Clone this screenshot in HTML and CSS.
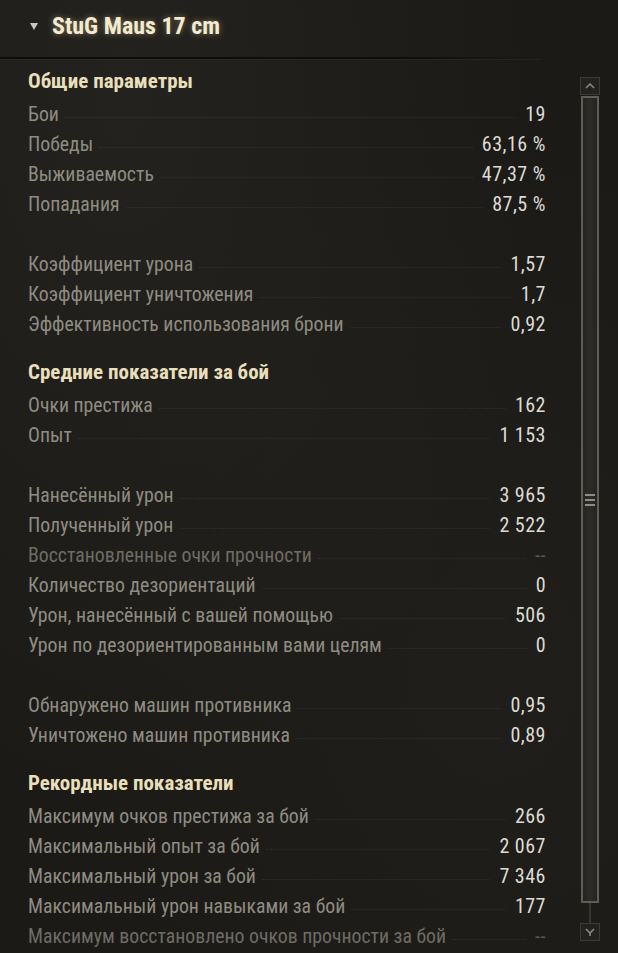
FILE: index.html
```html
<!DOCTYPE html>
<html lang="ru">
<head>
    <meta charset="UTF-8">
    <meta name="viewport" content="width=device-width, initial-scale=1.0">
    <title>StuG Maus 17 cm</title>
    <link rel="stylesheet" href="styles.css">
</head>
<body>

<div class="panel">
    <!-- Vehicle title -->
    <div class="panel-header">
        <span class="collapse-arrow"></span>
        <h1 class="vehicle-name">StuG Maus 17 cm</h1>
    </div>
    <div class="header-line"></div>

    <div class="panel-body">
        <div class="stats">
            <h2 class="stats-heading">Общие параметры</h2>
            <div class="stat"><span class="stat-label">Бои</span><span class="stat-dots"></span><span class="stat-value">19</span></div>
            <div class="stat"><span class="stat-label">Победы</span><span class="stat-dots"></span><span class="stat-value">63,16 %</span></div>
            <div class="stat"><span class="stat-label">Выживаемость</span><span class="stat-dots"></span><span class="stat-value">47,37 %</span></div>
            <div class="stat"><span class="stat-label">Попадания</span><span class="stat-dots"></span><span class="stat-value">87,5 %</span></div>
            <div class="stat-gap"></div>
            <div class="stat"><span class="stat-label">Коэффициент урона</span><span class="stat-dots"></span><span class="stat-value">1,57</span></div>
            <div class="stat"><span class="stat-label">Коэффициент уничтожения</span><span class="stat-dots"></span><span class="stat-value">1,7</span></div>
            <div class="stat"><span class="stat-label">Эффективность использования брони</span><span class="stat-dots"></span><span class="stat-value">0,92</span></div>

            <h2 class="stats-heading">Средние показатели за бой</h2>
            <div class="stat"><span class="stat-label">Очки престижа</span><span class="stat-dots"></span><span class="stat-value">162</span></div>
            <div class="stat"><span class="stat-label">Опыт</span><span class="stat-dots"></span><span class="stat-value">1 153</span></div>
            <div class="stat-gap"></div>
            <div class="stat"><span class="stat-label">Нанесённый урон</span><span class="stat-dots"></span><span class="stat-value">3 965</span></div>
            <div class="stat"><span class="stat-label">Полученный урон</span><span class="stat-dots"></span><span class="stat-value">2 522</span></div>
            <div class="stat disabled"><span class="stat-label">Восстановленные очки прочности</span><span class="stat-dots"></span><span class="stat-value">--</span></div>
            <div class="stat"><span class="stat-label">Количество дезориентаций</span><span class="stat-dots"></span><span class="stat-value">0</span></div>
            <div class="stat"><span class="stat-label">Урон, нанесённый с вашей помощью</span><span class="stat-dots"></span><span class="stat-value">506</span></div>
            <div class="stat"><span class="stat-label">Урон по дезориентированным вами целям</span><span class="stat-dots"></span><span class="stat-value">0</span></div>
            <div class="stat-gap"></div>
            <div class="stat"><span class="stat-label">Обнаружено машин противника</span><span class="stat-dots"></span><span class="stat-value">0,95</span></div>
            <div class="stat"><span class="stat-label">Уничтожено машин противника</span><span class="stat-dots"></span><span class="stat-value">0,89</span></div>

            <h2 class="stats-heading">Рекордные показатели</h2>
            <div class="stat"><span class="stat-label">Максимум очков престижа за бой</span><span class="stat-dots"></span><span class="stat-value">266</span></div>
            <div class="stat"><span class="stat-label">Максимальный опыт за бой</span><span class="stat-dots"></span><span class="stat-value">2 067</span></div>
            <div class="stat"><span class="stat-label">Максимальный урон за бой</span><span class="stat-dots"></span><span class="stat-value">7 346</span></div>
            <div class="stat"><span class="stat-label">Максимальный урон навыками за бой</span><span class="stat-dots"></span><span class="stat-value">177</span></div>
            <div class="stat disabled"><span class="stat-label">Максимум восстановлено очков прочности за бой</span><span class="stat-dots"></span><span class="stat-value">--</span></div>
        </div>

        <!-- Scrollbar -->
        <div class="scrollbar">
            <div class="scroll-btn">
                <svg width="10" height="6" viewBox="0 0 10 6"><path d="M1 5 L5 1 L9 5" fill="none" stroke="#8a877c" stroke-width="1.6"/></svg>
            </div>
            <div class="scroll-thumb">
                <span class="grip"></span>
                <span class="grip"></span>
                <span class="grip"></span>
            </div>
            <div class="scroll-track"></div>
            <div class="scroll-btn">
                <svg width="10" height="8" viewBox="0 0 10 8"><path d="M1 1 L5 5 L9 1 M5 5 L5 8" fill="none" stroke="#8a877c" stroke-width="1.6"/></svg>
            </div>
        </div>
    </div>
</div>

</body>
</html>
```

FILE: styles.css
```css
body {
    margin: 0;
    padding: 0;
    background: #1b1a17;
    font-family: "Roboto Condensed", Roboto, "Liberation Sans", sans-serif;
}

.panel {
    width: 618px;
    height: 953px;
    overflow: hidden;
    background:
        radial-gradient(ellipse at 20% 10%, rgba(60, 58, 50, 0.25), transparent 60%),
        radial-gradient(ellipse at 80% 70%, rgba(50, 48, 42, 0.2), transparent 60%),
        #1b1a17;
}

.panel-header {
    height: 57px;
    display: flex;
    align-items: center;
    padding-left: 30px;
    box-sizing: border-box;
    padding-bottom: 6px;
}

.collapse-arrow {
    width: 0;
    height: 0;
    border-left: 4px solid transparent;
    border-right: 4px solid transparent;
    border-top: 7px solid #c9c6bc;
    margin-right: 14px;
    margin-top: 1px;
}

.vehicle-name {
    margin: 0;
    font-size: 24px;
    font-weight: bold;
    color: #f3ead0;
    text-shadow: 0 0 6px rgba(240, 220, 160, 0.45);
}

.header-line {
    width: 540px;
    height: 2px;
    background: linear-gradient(to right, #0d0d0b 0%, #0d0d0b 75%, rgba(13, 13, 11, 0) 100%);
    box-shadow: 0 1px 0 rgba(70, 70, 60, 0.25);
}

.panel-body {
    display: flex;
    padding-left: 28px;
}

.stats {
    width: 518px;
    padding-top: 7px;
}

.stats-heading {
    margin: 18px 0 3px;
    height: 30px;
    line-height: 30px;
    font-size: 21px;
    font-weight: bold;
    color: #e8dfbb;
}

.stats-heading:first-child {
    margin-top: 0;
}

.stat {
    display: flex;
    align-items: baseline;
    height: 30px;
    line-height: 30px;
    font-size: 19.8px;
}

.stat-label {
    color: #8f8c82;
    white-space: nowrap;
}

.stat-dots {
    flex: 1;
    margin: 0 9px 0 6px;
    border-bottom: 1px dotted rgba(120, 118, 108, 0.2);
    position: relative;
    top: -3px;
}

.stat-value {
    color: #dedbd3;
    font-size: 20px;
    letter-spacing: 0.5px;
}

.stat.disabled .stat-label {
    color: #6f6c64;
}

.stat.disabled .stat-value {
    color: #5e5c55;
}

.stat-gap {
    height: 30px;
}

.scrollbar {
    width: 20px;
    margin-left: 34px;
    margin-top: 18px;
    display: flex;
    flex-direction: column;
    align-items: center;
}

.scroll-btn {
    width: 20px;
    height: 18px;
    box-sizing: border-box;
    border: 1px solid #3b3a34;
    background: #23221e;
    display: flex;
    align-items: center;
    justify-content: center;
}

.scroll-thumb {
    width: 18px;
    height: 807px;
    box-sizing: border-box;
    margin-top: 1px;
    border: 2px solid #5f5d54;
    background: linear-gradient(to right, #24231f 0%, #2c2b27 45%, #2c2b27 55%, #24231f 100%);
    display: flex;
    flex-direction: column;
    align-items: center;
    justify-content: center;
    gap: 3px;
}

.grip {
    width: 10px;
    height: 2px;
    background: #8e8b80;
}

.scroll-track {
    width: 2px;
    height: 20px;
    background: #37362f;
}
```
